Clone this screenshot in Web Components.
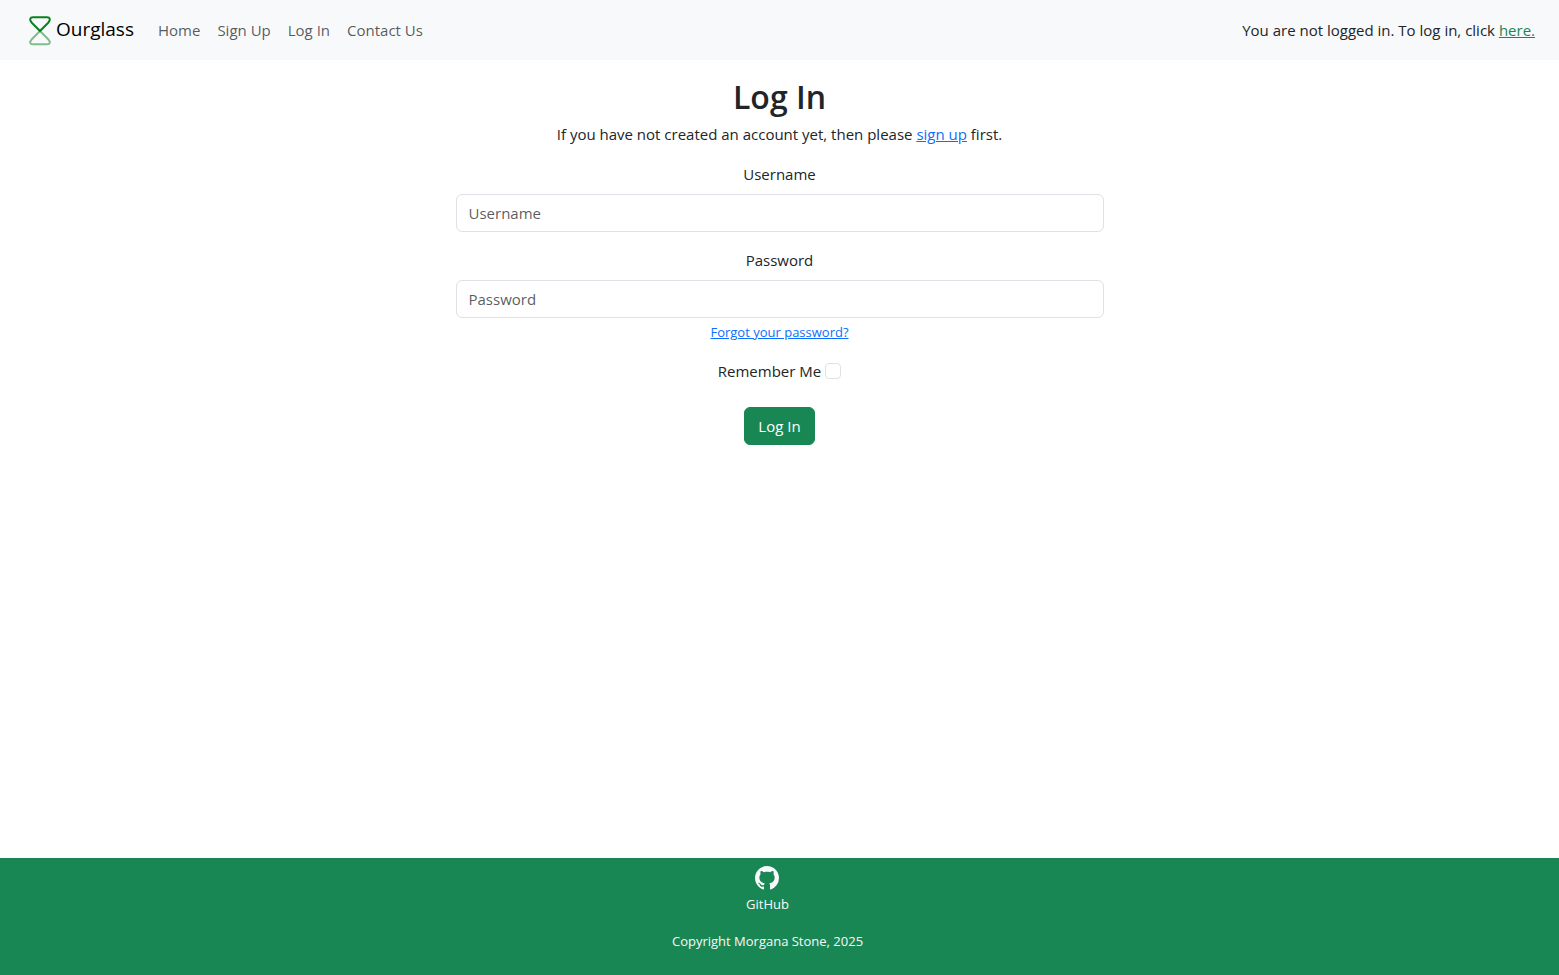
<!DOCTYPE html>
<html lang="en">
<head>
<meta charset="utf-8">
<meta name="viewport" content="width=device-width, initial-scale=1">
<title>Ourglass - Log In</title>
<style>
  body {
    margin: 0;
    font: 15px/24px "Open Sans", "Noto Sans", sans-serif;
    color: #212529;
    background: #fff;
  }
</style>
</head>
<body>
<og-page>
  <og-navbar slot="header">
    <og-nav-link href="#home">Home</og-nav-link>
    <og-nav-link href="#signup">Sign Up</og-nav-link>
    <og-nav-link href="#login">Log In</og-nav-link>
    <og-nav-link href="#contact">Contact Us</og-nav-link>
    <og-text-link slot="status" tone="success" href="#login" before="You are not logged in. To log in, click ">here.</og-text-link>
  </og-navbar>
  <og-login-form></og-login-form>
  <og-footer slot="footer">Copyright Morgana Stone, 2025</og-footer>
</og-page>

<script>
const define = (name, html, setup) => {
  const template = document.createElement("template");
  template.innerHTML = html;
  customElements.define(name, class extends HTMLElement {
    constructor() {
      super();
      this.attachShadow({ mode: "open" }).append(template.content.cloneNode(true));
    }
    connectedCallback() {
      if (setup) setup(this, this.shadowRoot);
    }
  });
};

define("og-page", `
  <style>
    :host { display: flex; flex-direction: column; min-height: 100vh; }
    main { flex: 1; }
  </style>
  <slot name="header"></slot>
  <main><slot></slot></main>
  <slot name="footer"></slot>
`);

define("og-nav-link", `
  <style>
    :host { display: block; }
    a { display: block; padding: 8px; color: rgba(33, 37, 41, .75); text-decoration: none; }
    a:hover { color: #212529; }
  </style>
  <a><slot></slot></a>
`, (host, root) => { root.querySelector("a").href = host.getAttribute("href"); });

define("og-text-link", `
  <style>
    :host { display: block; }
    a { color: #0d6efd; }
    :host([tone="success"]) a { color: #198754; }
  </style>
  <span id="before"></span><a><slot></slot></a><span id="after"></span>
`, (host, root) => {
  root.querySelector("a").href = host.getAttribute("href");
  root.getElementById("before").textContent = host.getAttribute("before") || "";
  root.getElementById("after").textContent = host.getAttribute("after") || "";
});

define("og-navbar", `
  <style>
    :host { display: block; background: #f8f9fa; }
    nav { display: flex; align-items: center; min-height: 60px; padding: 0 24px; }
    .brand { display: flex; align-items: center; margin-right: 16px; color: #000; font-size: 19px; line-height: 28px; text-decoration: none; }
    .brand svg { width: 32px; height: 32px; flex: none; }
    .brand span { padding-bottom: 2px; }
    .links { display: flex; flex: 1; gap: 1px; }
  </style>
  <nav aria-label="Main">
    <a class="brand" href="#home">
      <svg viewBox="0 0 32 32" fill="none" stroke="#0a8020" stroke-width="2" stroke-linejoin="round" aria-hidden="true">
        <path stroke-opacity=".5" d="M16 17 7.800 25.300C5 28.300 6 30.300 9 30.300H23C26 30.300 27 28.300 24.200 25.300Z"/>
        <path d="M16 17 7.800 8.700C5 5.700 6 3.200 9 3.200H23C26 3.200 27 5.700 24.200 8.700Z"/>
      </svg>
      <span>Ourglass</span>
    </a>
    <div class="links"><slot></slot></div>
    <slot name="status"></slot>
  </nav>
`);

define("og-field", `
  <style>
    :host { display: block; text-align: center; }
    label { display: block; margin-bottom: 8px; }
    input {
      display: block; box-sizing: border-box; width: 100%; height: 38px; padding: 6px 12px;
      font: inherit; color: #212529; background: #fff;
      border: 1px solid #dee2e6; border-radius: 6px;
    }
    input::placeholder { color: rgba(33, 37, 41, .75); opacity: 1; }
    input:focus { outline: 0; border-color: #86b7fe; box-shadow: 0 0 0 4px rgba(13, 110, 253, .25); }
  </style>
  <label for="control"></label>
  <input id="control">
`, (host, root) => {
  const input = root.querySelector("input");
  root.querySelector("label").textContent = host.getAttribute("label");
  input.placeholder = host.getAttribute("label");
  input.type = host.getAttribute("type") || "text";
});

define("og-login-form", `
  <style>
    :host { display: block; max-width: 1296px; margin: 0 auto; padding-top: 18px; text-align: center; }
    form { display: flex; flex-direction: column; gap: 16px; width: 50%; margin: 0 auto; }
    h1 { margin: 0 0 6px; font-size: 32px; line-height: 38px; font-weight: 600; }
    .help { margin-top: 4px; font-size: 13px; line-height: 21px; }
    .remember { display: flex; justify-content: center; align-items: center; gap: 4px; }
    input {
      appearance: none; box-sizing: border-box; width: 16px; height: 16px; margin: 0;
      background: #fff; border: 1px solid #dee2e6; border-radius: 4px;
    }
    input:checked { background: #0d6efd; border-color: #0d6efd; }
    button {
      align-self: center; margin-top: 8px; padding: 6px 13px; font: inherit; color: #fff;
      background: #198754; border: 1px solid #198754; border-radius: 6px; cursor: pointer;
    }
  </style>
  <form>
    <header>
      <h1>Log In</h1>
      <og-text-link href="#signup" before="If you have not created an account yet, then please " after=" first.">sign up</og-text-link>
    </header>
    <og-field label="Username"></og-field>
    <div>
      <og-field label="Password" type="password"></og-field>
      <og-text-link class="help" href="#forgot">Forgot your password?</og-text-link>
    </div>
    <div class="remember">
      <label for="remember">Remember Me</label>
      <input id="remember" type="checkbox">
    </div>
    <button type="submit">Log In</button>
  </form>
`);

define("og-footer", `
  <style>
    :host { display: block; background: #198754; color: #f8f9fa; font-size: 13px; line-height: 21px; text-align: center; }
    footer { display: flex; flex-direction: column; align-items: center; gap: 16px; padding: 8px 24px 23px 0; }
    a { display: flex; flex-direction: column; align-items: center; gap: 4px; color: inherit; text-decoration: none; }
    svg { width: 24px; height: 24px; }
    p { margin: 0; }
  </style>
  <footer>
    <a href="#github">
      <svg viewBox="0 0 16 16" fill="currentColor" aria-hidden="true"><path d="M8 0C3.580 0 0 3.580 0 8c0 3.540 2.290 6.530 5.470 7.590.4.070.550-.170.550-.380 0-.190-.010-.820-.010-1.490-2.010.370-2.530-.490-2.690-.940-.090-.230-.480-.940-.820-1.130-.280-.150-.680-.520-.010-.530.630-.010 1.080.580 1.230.820.720 1.210 1.870.870 2.330.660.070-.520.280-.870.510-1.070-1.780-.2-3.640-.890-3.640-3.950 0-.870.310-1.590.820-2.150-.080-.2-.360-1.020.080-2.120 0 0 .670-.210 2.200.820.640-.180 1.320-.270 2-.270s1.360.090 2 .270c1.530-1.040 2.200-.820 2.200-.820.440 1.100.160 1.920.080 2.120.510.560.820 1.270.820 2.150 0 3.070-1.870 3.750-3.650 3.950.290.250.540.730.540 1.480 0 1.070-.010 1.930-.010 2.200 0 .210.150.460.550.380A8.010 8.010 0 0 0 16 8c0-4.420-3.580-8-8-8z"/></svg>
      <span>GitHub</span>
    </a>
    <p><slot></slot></p>
  </footer>
`);
</script>
</body>
</html>
